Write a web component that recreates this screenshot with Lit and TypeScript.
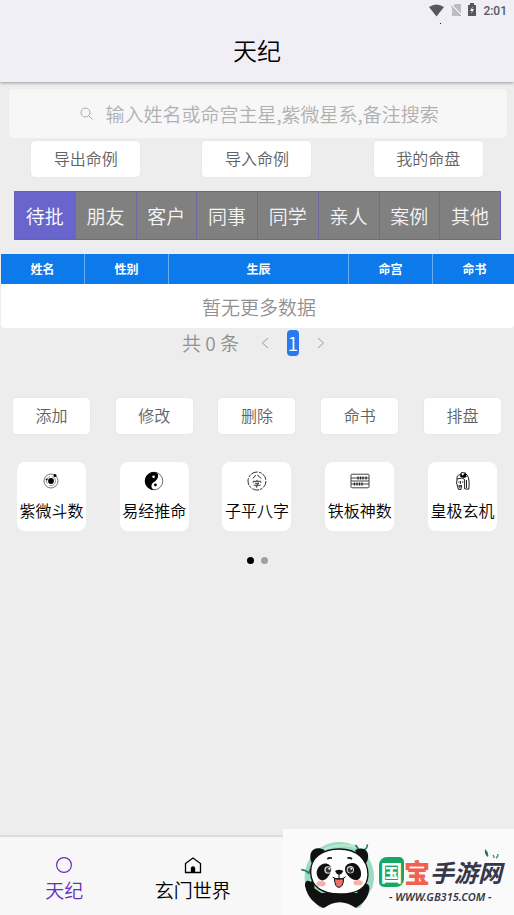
import { LitElement, html, css, svg } from "lit";
import { customElement, state } from "lit/decorators.js";
import { classMap } from "lit/directives/class-map.js";

const GROUPS = ["待批", "朋友", "客户", "同事", "同学", "亲人", "案例", "其他"];
const COLUMNS = [
  { label: "姓名", cls: "narrow" },
  { label: "性别", cls: "narrow" },
  { label: "生辰", cls: "wide" },
  { label: "命宫", cls: "narrow" },
  { label: "命书", cls: "narrow" },
];
const FILE_ACTIONS = ["导出命例", "导入命例", "我的命盘"];
const ROW_ACTIONS = ["添加", "修改", "删除", "命书", "排盘"];

const orbitIcon = svg`
  <g fill="none" stroke="#222">
    <circle cx="10" cy="10" r="7" stroke-width=".8" stroke="#555"/>
    <circle cx="10" cy="10" r="4.6" stroke-width=".7" stroke="#777" stroke-dasharray="9 2"/>
  </g>
  <circle cx="10" cy="10" r="2.9"/><circle cx="14" cy="4.4" r="1.5"/><circle cx="5.6" cy="8.4" r=".9"/>`;

const taijiIcon = svg`
  <circle cx="10" cy="10" r="8.8" fill="#fff" stroke="#333" stroke-width=".7"/>
  <path d="M13 1.7A8.9 8.9 0 1 0 10 18.9C6.8 17.3 6.5 13.4 9.6 11.3C13 9.7 15.8 5 13 1.7Z"/>
  <circle cx="9.6" cy="5.8" r="1.3" fill="#fff"/><circle cx="11.4" cy="13.9" r="1.4"/>`;

const baziIcon = svg`
  <g fill="none" stroke="#333" stroke-width="1">
    <circle cx="10" cy="10" r="9" stroke-dasharray="7 1.2 3 .8"/>
    <path d="M8.7 4L6 7.5M10.7 3.8C11.5 5.5 12.6 6.5 14.4 7.2M6.2 11.8V10.3H13.8V11.8M10 9V10M8 12.2H12L10 13.6V16.2L8.8 15.8M6.6 14.2H13.6"/>
  </g>`;

const abacusIcon = svg`
  <g fill="none" stroke="#444" stroke-width="1">
    <rect x="1" y="3.2" width="18" height="13.6" rx="1"/>
    <path d="M1 7H19M1 10H19M1 13H19"/>
  </g>
  <g fill="none" stroke="#222" stroke-width="1.3">
    <path d="M8 5.4V8.6M10.5 5.4V8.6M13 5.4V8.6M16 5.4V8.6M4.5 11.4V14.6M7 11.4V14.6M9.500 11.4V14.6M12 11.4V14.6"/>
  </g>`;

const sageIcon = svg`
  <g fill="none" stroke="#222" stroke-width="1">
    <path d="M4 8C3.6 5.5 5 3.6 7.4 3.8L8.5 1.5L12 2L14.4 4.4C16 7 16.6 12 15.8 18M4 8L3.6 12L5.4 18.4H8L8.6 14M4 8L8.8 7L11.6 8.4V18M5.3 11H6.5M9 11H10.4M7.4 10V13M5.6 14.6H8.6M12 18H16M13.5 9V17"/>
  </g>
  <path d="M8 2L9.7 4.8L12.5 1.3L13.7 5.8L11 7L7 5.7Z"/>
  <path d="M5 14.8L8 14.4L7 18Z" fill="#555"/>`;

const TOOLS = [
  { label: "紫微斗数", icon: orbitIcon },
  { label: "易经推命", icon: taijiIcon },
  { label: "子平八字", icon: baziIcon },
  { label: "铁板神数", icon: abacusIcon },
  { label: "皇极玄机", icon: sageIcon },
];

@customElement("site-badge")
class SiteBadge extends LitElement {
  static styles = css`
    :host {
      display: flex;
      width: 231px;
      height: 86px;
      background: #fafafb;
      font-family: "Noto Sans CJK SC", sans-serif;
      color: #353849;
    }
    .panda { flex: none; width: 92px; height: 86px; }
    .words { position: relative; flex: 1; padding-top: 25px; white-space: nowrap; }
    .name {
      display: flex;
      align-items: flex-end;
      height: 36px;
      padding-left: 4px;
      font-style: italic;
      font-weight: 700;
      font-size: 24px;
      line-height: 36px;
    }
    .guo {
      width: 25px;
      height: 30px;
      margin-bottom: 3px;
      border-radius: 8px 5px 8px 5px;
      background: #16a765;
      color: #fff;
      font-size: 22px;
      font-style: normal;
      line-height: 28px;
      text-align: center;
    }
    .bao { color: #f4604f; font-size: 26px; font-style: normal; font-weight: 900; }
    .url {
      display: block;
      padding-left: 14px;
      font: italic 600 11px/14px "Noto Sans", sans-serif;
    }
    .leaf { position: absolute; right: 14px; top: 18px; width: 18px; height: 14px; }
  `;

  render() {
    return html`
      <svg class="panda" viewBox="9 12 276 258" aria-hidden="true">
        <path d="M80 190A104 104 0 1 1 276 190L240 248H118Z" fill="#9bdcc0"/>
        <path d="M100 96Q150 48 230 66" fill="none" stroke="#b9ead3" stroke-width="6"/>
        <path d="M64 134Q78 135 88 146M91 131L86 147M226 60Q233 66 236 76M262 58Q263 70 252 74" fill="none" stroke="#218364" stroke-width="5"/>
        <path d="M94 112C82 76 106 60 134 75L108 124Z" fill="#111"/>
        <path d="M225 76C250 60 275 79 260 112L247 120Z" fill="#111"/>
        <path d="M75 183C74 168 82 163 91 170C102 165 105 176 103 190L124 204H232L233 185C235 174 243 177 248 180C259 172 270 179 268 192C265 222 246 236 229 248H128C105 237 83 219 75 183Z" fill="#111"/>
        <path d="M131 250Q178 214 229 250Z" fill="#fafafb"/>
        <path d="M92 142C90 96 130 72 178 72C231 72 264 104 264 149C263 191 226 207 178 207C130 207 93 188 92 142Z" fill="#fff" stroke="#111" stroke-width="4"/>
        <path d="M112 154C104 135 121 112 141 116C158 120 156 142 145 154C136 170 118 171 112 154Z" fill="#111"/>
        <path d="M202 149C189 133 195 115 215 114C234 112 248 137 242 155C235 171 216 167 202 149Z" fill="#111"/>
        <circle cx="144" cy="135" r="11" fill="#ddd"/><circle cx="145" cy="135" r="8" fill="#333"/><circle cx="148" cy="131" r="3" fill="#fff"/>
        <circle cx="211" cy="134" r="11" fill="#ddd"/><circle cx="211" cy="135" r="8" fill="#333"/><circle cx="214" cy="131" r="3" fill="#fff"/>
        <path d="M142 102Q148 97 156 100M202 100Q209 96 216 102" fill="none" stroke="#111" stroke-width="5"/>
        <path d="M165 138Q177 130 190 138Q185 149 177 149Q169 148 165 138Z" fill="#111"/>
        <path d="M163 160Q165 188 177 187Q190 186 191 160Q178 166 163 160Z" fill="#e8716b" stroke="#111" stroke-width="3"/>
        <path d="M177 148V160M158 156Q168 166 177 160Q188 166 197 155" fill="none" stroke="#111" stroke-width="3"/>
        <ellipse cx="123" cy="176" rx="14" ry="8" fill="#f8b0ab"/><ellipse cx="234" cy="173" rx="14" ry="8" fill="#f8b0ab"/>
      </svg>
      <div class="words">
        <div class="name"><span class="guo">国</span><span class="bao">宝</span><span>手游网</span></div>
        <span class="url">- WWW.GB315.COM -</span>
        <svg class="leaf" viewBox="0 0 18 14" aria-hidden="true">
          <path d="M3 2Q7 5 6 10Q2 8 3 2Z" fill="#247c5e"/>
          <path d="M11 8Q12 9 12 11M16 7Q16 10 14 11" fill="none" stroke="#3f927a" stroke-width="1.4"/>
        </svg>
      </div>
    `;
  }
}

@customElement("app-root")
class AppRoot extends LitElement {
  @state() private group = 0;

  static styles = css`
    :host {
      position: relative;
      display: flex;
      flex-direction: column;
      min-height: 100vh;
      overflow-x: hidden;
      background: #ededed;
      color: #000;
      font-family: "Noto Sans CJK SC", sans-serif;
      font-size: 19px;
      font-weight: 350;
      line-height: 28px;
    }
    * { box-sizing: border-box; }
    button, input { font: inherit; color: inherit; border: 0; margin: 0; padding: 0; background: none; }
    button { cursor: pointer; }

    .top { background: #f0eff5; box-shadow: 0 1px 3px #9a9aa2; }
    .status {
      position: relative;
      display: flex;
      justify-content: flex-end;
      align-items: center;
      gap: 7px;
      height: 20px;
      padding-right: 7px;
      color: #58575c;
      font: 500 12px/20px Roboto, sans-serif;
    }
    .status svg { height: 14px; }
    .status .battery { margin: 0 -1px 0 -2px; }
    .status span { padding-top: 2px; }
    .notch { position: absolute; right: 73px; top: 23px; width: 1px; height: 1px; background: #222; }
    h1 { margin: 0; padding: 12px 0 14px; font-size: 24px; font-weight: 350; line-height: 36px; text-align: center; }

    main { display: flex; flex-direction: column; padding-top: 7px; }
    .search {
      display: flex;
      align-items: center;
      justify-content: center;
      gap: 13px;
      height: 49px;
      margin: 0 7px 0 9px;
      padding-left: 3px;
      border-radius: 5px;
      background: #f7f7f7;
    }
    .search svg { flex: none; width: 13px; height: 13px; }
    .search input { width: 334px; height: 32px; outline: none; }
    .search input::placeholder { color: #b0b0b0; opacity: 1; }

    .row { display: flex; justify-content: space-around; }
    .file { margin-top: 3px; }
    .rowact { margin-top: 40px; }
    .plain {
      width: 77px;
      height: 36px;
      padding-bottom: 2px;
      border-radius: 4px;
      background: #fff;
      box-shadow: 0 0 1px #ccc;
      color: #606266;
      font-size: 16px;
      line-height: 24px;
    }
    .file .plain { width: 109px; }

    .tabs { display: flex; margin: 14px 13px 0 14px; border: 1px solid #6663bd; background: #808080; }
    .tab { flex: 1; height: 47px; color: #f4f4f4; }
    .tab + .tab { border-left: 1px solid #6c69a8; }
    .tab.on { background: #6866cd; color: #fff; }

    .list { margin: 14px 0 0 1px; overflow: hidden; border-radius: 0 0 4px 4px; }
    table { width: calc(100% + 3px); border-collapse: separate; border-spacing: 0; table-layout: fixed; background: #fff; }
    th { height: 30px; padding: 0; background: #0d7aec; color: #fff; font-size: 12px; font-weight: 700; line-height: 18px; }
    th { border-right: 1px solid #67adf4; }
    .narrow { width: 84px; }
    td { height: 44px; padding: 2px 0 0; color: #909090; text-align: center; }

    .pager { display: flex; justify-content: center; align-items: center; height: 30px; padding-left: 2px; color: #909090; }
    .pager svg { width: 8px; height: 12px; }
    .step { display: flex; align-items: center; justify-content: center; width: 26px; height: 28px; }
    .total { margin-right: 13px; }
    .page { width: 12px; height: 26px; margin: 0 9px; border-radius: 4px; background: #2878ef; color: #fff; line-height: 26px; }

    .tools { margin-top: 28px; }
    .tool {
      display: flex;
      flex-direction: column;
      align-items: center;
      gap: 7px;
      width: 69px;
      height: 69px;
      padding-top: 9px;
      border-radius: 8px;
      background: #fff;
      font-size: 16px;
      line-height: 24px;
      white-space: nowrap;
    }
    .tool svg { width: 20px; height: 20px; }
    .dots { display: flex; justify-content: center; gap: 7px; margin-top: 26px; }
    .dot { width: 7px; height: 7px; border-radius: 50%; background: #a0a0a0; }
    .dot.on { background: #000; }

    nav {
      display: grid;
      grid-template-columns: repeat(4, 1fr);
      height: 80px;
      margin-top: auto;
      border-top: 2px solid #dcdcdc;
      background: #f7f7f7;
    }
    nav a {
      display: flex;
      flex-direction: column;
      align-items: center;
      gap: 2px;
      padding-top: 19px;
      color: #000;
      text-decoration: none;
    }
    nav a.on { color: #6a2fc0; }
    nav svg { width: 18px; height: 18px; }
    site-badge { position: absolute; right: 0; bottom: 0; }
  `;

  render() {
    return html`
      <header class="top">
        <div class="status">
          <svg width="15" viewBox="0 0 15 14" fill="currentColor"><path d="M0 4Q7.500-1 15 4L7.500 13.500Z"/></svg>
          <svg width="11" viewBox="0 0 11 14"><path d="M4 1H10V13H1V4Z" fill="#bdbcc1"/><path d="M0 2L11 13" stroke="#f0eff5" stroke-width="2"/><path d="M0 3L10 13" stroke="#a5a4a9"/></svg>
          <svg class="battery" width="10" viewBox="0 0 10 14"><path d="M1 2H3V0H7V2H9V13H1Z" fill="currentColor"/><path d="M6 3L3 8H5L4 11L7 6H5Z" fill="#fff"/></svg>
          <span>2:01</span>
          <i class="notch"></i>
        </div>
        <h1>天纪</h1>
      </header>
      <main>
        <label class="search">
          <svg viewBox="0 0 13 13" fill="none" stroke="#aaa"><circle cx="5.500" cy="5.500" r="4.500"/><path d="M9 9L12.500 12.500"/></svg>
          <input type="text" aria-label="搜索" placeholder="输入姓名或命宫主星,紫微星系,备注搜索" />
        </label>
        <div class="row file">${FILE_ACTIONS.map((t) => html`<button class="plain">${t}</button>`)}</div>
        <div class="tabs" role="tablist">
          ${GROUPS.map(
            (t, i) => html`<button
              role="tab"
              aria-selected=${i === this.group}
              class=${classMap({ tab: true, on: i === this.group })}
              @click=${() => (this.group = i)}
            >${t}</button>`
          )}
        </div>
        <div class="list">
          <table>
            <thead><tr>${COLUMNS.map((c) => html`<th class=${c.cls}>${c.label}</th>`)}</tr></thead>
            <tbody><tr><td colspan="5">暂无更多数据</td></tr></tbody>
          </table>
        </div>
        <div class="pager">
          <span class="total">共 0 条</span>
          <button class="step" aria-label="上一页"><svg viewBox="0 0 8 12" fill="none" stroke="#999"><path d="M7 1L1.500 6L7 11"/></svg></button>
          <button class="page">1</button>
          <button class="step" aria-label="下一页"><svg viewBox="0 0 8 12" fill="none" stroke="#999"><path d="M1 1L6.500 6L1 11"/></svg></button>
        </div>
        <div class="row rowact">${ROW_ACTIONS.map((t) => html`<button class="plain">${t}</button>`)}</div>
        <div class="row tools">
          ${TOOLS.map((t) => html`<button class="tool"><svg viewBox="0 0 20 20">${t.icon}</svg>${t.label}</button>`)}
        </div>
        <div class="dots"><i class="dot on"></i><i class="dot"></i></div>
      </main>
      <nav>
        <a class="on" href="#home">
          <svg viewBox="0 0 18 18" fill="none" stroke="currentColor" stroke-width="1.200"><circle cx="9" cy="9" r="7.400"/></svg>天纪
        </a>
        <a href="#world">
          <svg viewBox="0 0 18 18" fill="none" stroke="currentColor" stroke-width="1.300"><path d="M1.500 7.500L9 2L16.500 7.500V16.500H1.500Z"/><path d="M7.500 16V12Q9 10 10.500 12V16Z" fill="currentColor"/></svg>玄门世界
        </a>
      </nav>
      <site-badge></site-badge>
    `;
  }
}
